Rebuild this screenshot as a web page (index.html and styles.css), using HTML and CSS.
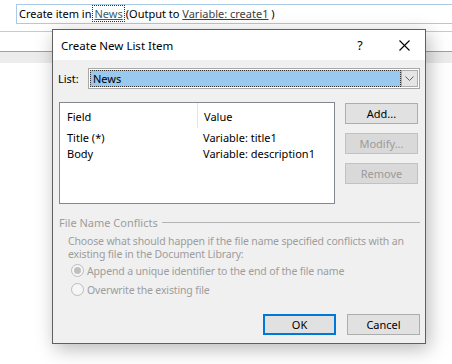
FILE: index.html
```html
<!DOCTYPE html>
<html lang="en">
<head>
    <meta charset="UTF-8">
    <title>Create New List Item</title>
    <link rel="stylesheet" href="styles.css">
</head>
<body>
    <div class="designer">
        <div class="action_box">
            Create item in<span class="field_link">News</span>(Output to <span class="var_link">Variable: create1</span> )
        </div>
        <div class="rule_light"></div>
        <div class="rule_dark"></div>
    </div>

    <div class="dialog">
        <div class="title_bar">
            <span class="title">Create New List Item</span>
            <span class="help">?</span>
            <span class="close">
                <svg width="11" height="11" viewBox="0 0 11 11">
                    <path d="M0.5 0.5 L10.5 10.5 M10.5 0.5 L0.5 10.5" stroke="#000" stroke-width="1.1" fill="none"/>
                </svg>
            </span>
        </div>
        <div class="dialog_body">
            <!--列表选择-->
            <div class="list_row">
                <label>List:</label>
                <div class="combo">
                    <span class="combo_value">News</span>
                    <span class="combo_btn">
                        <svg width="9" height="5" viewBox="0 0 9 5">
                            <path d="M0.5 0.5 L4.5 4.5 L8.5 0.5" stroke="#606060" stroke-width="1" fill="none"/>
                        </svg>
                    </span>
                </div>
            </div>

            <!--字段列表和按钮-->
            <div class="main_row">
                <div class="list_view">
                    <div class="lv_head">
                        <span class="col_field">Field</span>
                        <span class="col_value">Value</span>
                    </div>
                    <div class="lv_row">
                        <span class="col_field">Title (*)</span>
                        <span class="col_value">Variable: title1</span>
                    </div>
                    <div class="lv_row">
                        <span class="col_field">Body</span>
                        <span class="col_value">Variable: description1</span>
                    </div>
                </div>
                <div class="side_btns">
                    <a class="btn">Add...</a>
                    <a class="btn disabled">Modify...</a>
                    <a class="btn disabled">Remove</a>
                </div>
            </div>

            <!--文件名冲突-->
            <div class="group">
                <div class="group_head">
                    <span>File Name Conflicts</span>
                    <span class="group_line"></span>
                </div>
                <p class="group_desc">Choose what should happen if the file name specified conflicts with an<br>existing file in the Document Library:</p>
                <div class="radio_row">
                    <span class="radio checked"></span>
                    <span>Append a unique identifier to the end of the file name</span>
                </div>
                <div class="radio_row">
                    <span class="radio"></span>
                    <span>Overwrite the existing file</span>
                </div>
            </div>

            <div class="footer">
                <a class="btn default">OK</a>
                <a class="btn">Cancel</a>
            </div>
        </div>
    </div>
</body>
</html>
```

FILE: styles.css
```css
html{
    font-family: "Noto Sans", "Open Sans", sans-serif;
    font-size: 11px;
}
body,p{margin: 0;padding: 0;}
body{
    background: #fff;
    color: #000;
    width: 452px;
    height: 364px;
    overflow: hidden;
}

/* 背景里的设计器 */
.designer{
    padding-top: 4px;
}
.action_box{
    margin-left: 16px;
    height: 20px;
    line-height: 18px;
    box-sizing: border-box;
    border: 1px solid #a9cbe6;
    border-right: none;
    padding-left: 2px;
    white-space: nowrap;
}
.action_box .field_link{
    color: #3c6070;
    text-decoration: underline;
    outline: 1px dotted #333;
    outline-offset: -1px;
    padding: 1px 2px;
    margin: 0 1px 0 1px;
}
.action_box .var_link{
    color: #404040;
    text-decoration: underline;
}
.rule_light{
    margin-top: 7px;
    height: 1px;
    background: #c9c9cf;
}
.rule_dark{
    margin-top: 19px;
    height: 11px;
    border-top: 1px solid #a0a0a0;
    background: #ececec;
}

/* 对话框 */
.dialog{
    position: absolute;
    left: 52px;
    top: 29px;
    width: 372px;
    height: 313px;
    border: 1px solid #5f5f5f;
    background: #f0f0f0;
    box-shadow: 3px 5px 18px rgba(0,0,0,.28);
}
.title_bar{
    height: 30px;
    background: #fff;
    display: flex;
    align-items: center;
    padding-left: 8px;
    font-size: 11.5px;
}
.title_bar .title{
    flex: 1;
    padding-top: 1px;
}
.title_bar .help{
    width: 46px;
    text-align: center;
    font-size: 12.5px;
}
.title_bar .close{
    width: 42px;
    display: flex;
    justify-content: center;
    align-items: center;
}

.dialog_body{
    padding: 0 5px;
}

.list_row{
    display: flex;
    align-items: center;
    margin-top: 8px;
    height: 21px;
}
.list_row label{
    width: 30px;
}
.combo{
    flex: 1;
    height: 21px;
    box-sizing: border-box;
    border: 1px solid #a8a8a8;
    background: #fff;
    display: flex;
    padding: 1px;
}
.combo_value{
    flex: 1;
    background: #99c9ef;
    outline: 1px dotted #333;
    outline-offset: -1px;
    line-height: 17px;
    padding-left: 3px;
}
.combo_btn{
    width: 17px;
    box-sizing: border-box;
    border: 1px solid #acacac;
    background: #e5e5e5;
    display: flex;
    justify-content: center;
    align-items: center;
}

.main_row{
    display: flex;
    align-items: flex-start;
    height: 102px;
    margin-top: 13px;
    margin-left: 1px;
}
.list_view{
    flex: none;
    width: 276px;
    height: 102px;
    box-sizing: border-box;
    border: 1px solid #828790;
    background: #fff;
}
.lv_head,.lv_row{
    display: flex;
}
.lv_head{
    height: 27px;
    line-height: 27px;
}
.lv_row{
    height: 16px;
    line-height: 16px;
}
.col_field{
    width: 130px;
    padding-left: 7px;
}
.col_value{
    padding-left: 6px;
}
.lv_head .col_field{
    border-right: 1px solid #e5e5e5;
    height: 25px;
}
.side_btns{
    margin-left: 10px;
    margin-top: 1px;
    display: flex;
    flex-direction: column;
    gap: 9px;
}

.btn{
    display: block;
    width: 73px;
    height: 21px;
    line-height: 19px;
    box-sizing: border-box;
    border: 1px solid #adadad;
    background: #e1e1e1;
    text-align: center;
    cursor: default;
}
.btn.disabled{
    background: #d9d9d9;
    border-color: #c2c2c2;
    color: #9b9b9b;
}
.btn.default{
    border: 2px solid #0078d7;
    line-height: 17px;
}

/* 分组 */
.group{
    color: #9d9d9d;
    margin-top: 11px;
}
.group_head{
    display: flex;
    align-items: center;
    height: 14px;
    padding-left: 1px;
}
.group_line{
    flex: 1;
    height: 1px;
    background: #b4b4b4;
    margin-left: 4px;
}
.group_desc{
    margin-top: 6px;
    padding-left: 10px;
    font-size: 10.5px;
    letter-spacing: -0.15px;
    line-height: 13px;
    white-space: nowrap;
}
.radio_row{
    display: flex;
    align-items: center;
    height: 19px;
    padding-left: 13px;
    font-size: 10.5px;
    letter-spacing: -0.15px;
}
.radio{
    width: 13px;
    height: 13px;
    box-sizing: border-box;
    border: 1px solid #bcbcbc;
    border-radius: 50%;
    background: #f6f6f6;
    margin-right: 3px;
    display: flex;
    justify-content: center;
    align-items: center;
}
.radio.checked:after{
    content: "";
    width: 7px;
    height: 7px;
    border-radius: 50%;
    background: #c0c0c0;
}

.footer{
    display: flex;
    justify-content: flex-end;
    gap: 11px;
    margin-top: 15px;
}
```
